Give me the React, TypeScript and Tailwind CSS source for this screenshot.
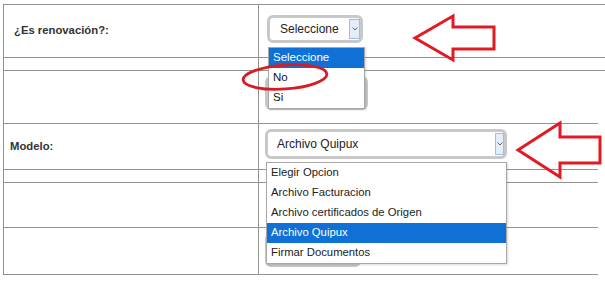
import React from "react";

const Chevron = () => (
  <svg width="6" height="4" viewBox="0 0 6 4" className="block">
    <polyline points="0.5,0.5 3,3 5.5,0.5" fill="none" stroke="#555" strokeWidth="0.9" />
  </svg>
);

function FakeSelect({
  value,
  w,
  h,
  textPl,
  btnW,
  showValue = true,
}: {
  value?: string;
  w: string;
  h: string;
  textPl: string;
  btnW: string;
  showValue?: boolean;
}) {
  return (
    <div className={`${w} ${h} border-[3px] border-[#c8c8c8] rounded-[6px] bg-white flex items-stretch`}>
      <div className={`flex-1 flex items-center ${textPl} text-[12px] text-[#222] leading-none`}>
        {showValue ? value : null}
      </div>
      <div className={`${btnW} my-[1px] mr-[0px] border border-[#9fbde2] bg-[#e4eefa] flex items-center justify-center`}>
        <Chevron />
      </div>
    </div>
  );
}

function Row({
  h,
  wide,
  label,
  labelPl = "pl-[9px]",
  children,
  cellClass = "",
  last = false,
}: {
  h: string;
  wide: boolean;
  label?: string;
  labelPl?: string;
  children?: React.ReactNode;
  cellClass?: string;
  last?: boolean;
}) {
  return (
    <div
      className={`flex ${h} ${wide ? "w-[602px]" : "w-[595px]"} border-t border-[#929292] ${
        last ? "border-b" : ""
      } box-content`}
    >
      <div className={`w-[255px] shrink-0 border-l border-[#929292] flex items-center ${labelPl}`}>
        {label ? (
          <span className="text-[11.3px] font-bold text-[#333] leading-none">{label}</span>
        ) : null}
      </div>
      <div className={`flex-1 border-l border-[#929292] ${cellClass}`}>{children}</div>
    </div>
  );
}

export default function App() {
  const list1 = ["Seleccione", "No", "Si"];
  const list2 = [
    "Elegir Opcion",
    "Archivo Facturacion",
    "Archivo certificados de Origen",
    "Archivo Quipux",
    "Firmar Documentos",
  ];
  return (
    <div
      className="relative w-[605px] h-[286px] bg-white overflow-hidden"
      style={{ fontFamily: '"Liberation Sans", Arial, sans-serif' }}
    >
      <div className="ml-[3px] pt-[4px] flex flex-col">
        <Row h="h-[52px]" wide label="¿Es renovación?:" labelPl="pl-[10px]" cellClass="pl-[8px] pt-[10px]">
          <FakeSelect value="Seleccione" w="w-[96px]" h="h-[28px]" textPl="pl-[10px]" btnW="w-[11px]" />
        </Row>
        <Row h="h-[12px]" wide />
        <Row h="h-[52px]" wide cellClass="pl-[6px] pt-[5px]">
          <FakeSelect w="w-[103px]" h="h-[34px]" textPl="pl-[10px]" btnW="w-[11px]" showValue={false} />
        </Row>
        <Row h="h-[45px]" wide={false} label="Modelo:" labelPl="pl-[6px]" cellClass="pl-[6px] pt-[5px]">
          <FakeSelect value="Archivo Quipux" w="w-[242px]" h="h-[30px]" textPl="pl-[9px]" btnW="w-[9px]" />
        </Row>
        <Row h="h-[12px]" wide={false} />
        <Row h="h-[44px]" wide={false} />
        <Row h="h-[46px]" wide={false} last cellClass="pl-[6px] pt-[5px]">
          <FakeSelect w="w-[96px]" h="h-[34px]" textPl="pl-[10px]" btnW="w-[11px]" showValue={false} />
        </Row>
      </div>

      {/* dropdown list 1 */}
      <div className="absolute left-[268px] top-[47px] w-[97px] border border-[#a8a8a8] bg-white shadow-[1px_1px_2px_rgba(0,0,0,0.15)]">
        {list1.map((t, i) => (
          <div
            key={t}
            className={`h-[20px] flex items-center pl-[4px] text-[11.5px] leading-none ${
              i === 0 ? "bg-[#0f70d6] text-white" : "text-[#111]"
            }`}
          >
            {t}
          </div>
        ))}
      </div>

      {/* dropdown list 2 */}
      <div className="absolute left-[266px] top-[162px] w-[241px] border border-[#a8a8a8] bg-white shadow-[1px_1px_2px_rgba(0,0,0,0.15)]">
        {list2.map((t, i) => (
          <div
            key={t}
            className={`h-[20px] flex items-center pl-[4px] text-[11.3px] leading-none ${
              i === 3 ? "bg-[#0f70d6] text-white" : "text-[#222]"
            }`}
          >
            {t}
          </div>
        ))}
      </div>

      {/* annotations */}
      <svg className="absolute left-0 top-0 pointer-events-none" width="605" height="286">
        <polygon
          points="415,38 453,16 453,27 494,27 494,49 453,49 453,60"
          fill="none"
          stroke="#e01b24"
          strokeWidth="3"
          strokeLinejoin="miter"
        />
        <polygon
          points="518,150 560,123 560,137 600,137 600,163 560,163 560,177"
          fill="none"
          stroke="#e01b24"
          strokeWidth="3"
          strokeLinejoin="miter"
        />
        <ellipse
          cx="285"
          cy="77"
          rx="42"
          ry="12"
          fill="none"
          stroke="#d81c24"
          strokeWidth="2.8"
          transform="rotate(-4 285 77)"
        />
      </svg>
    </div>
  );
}
